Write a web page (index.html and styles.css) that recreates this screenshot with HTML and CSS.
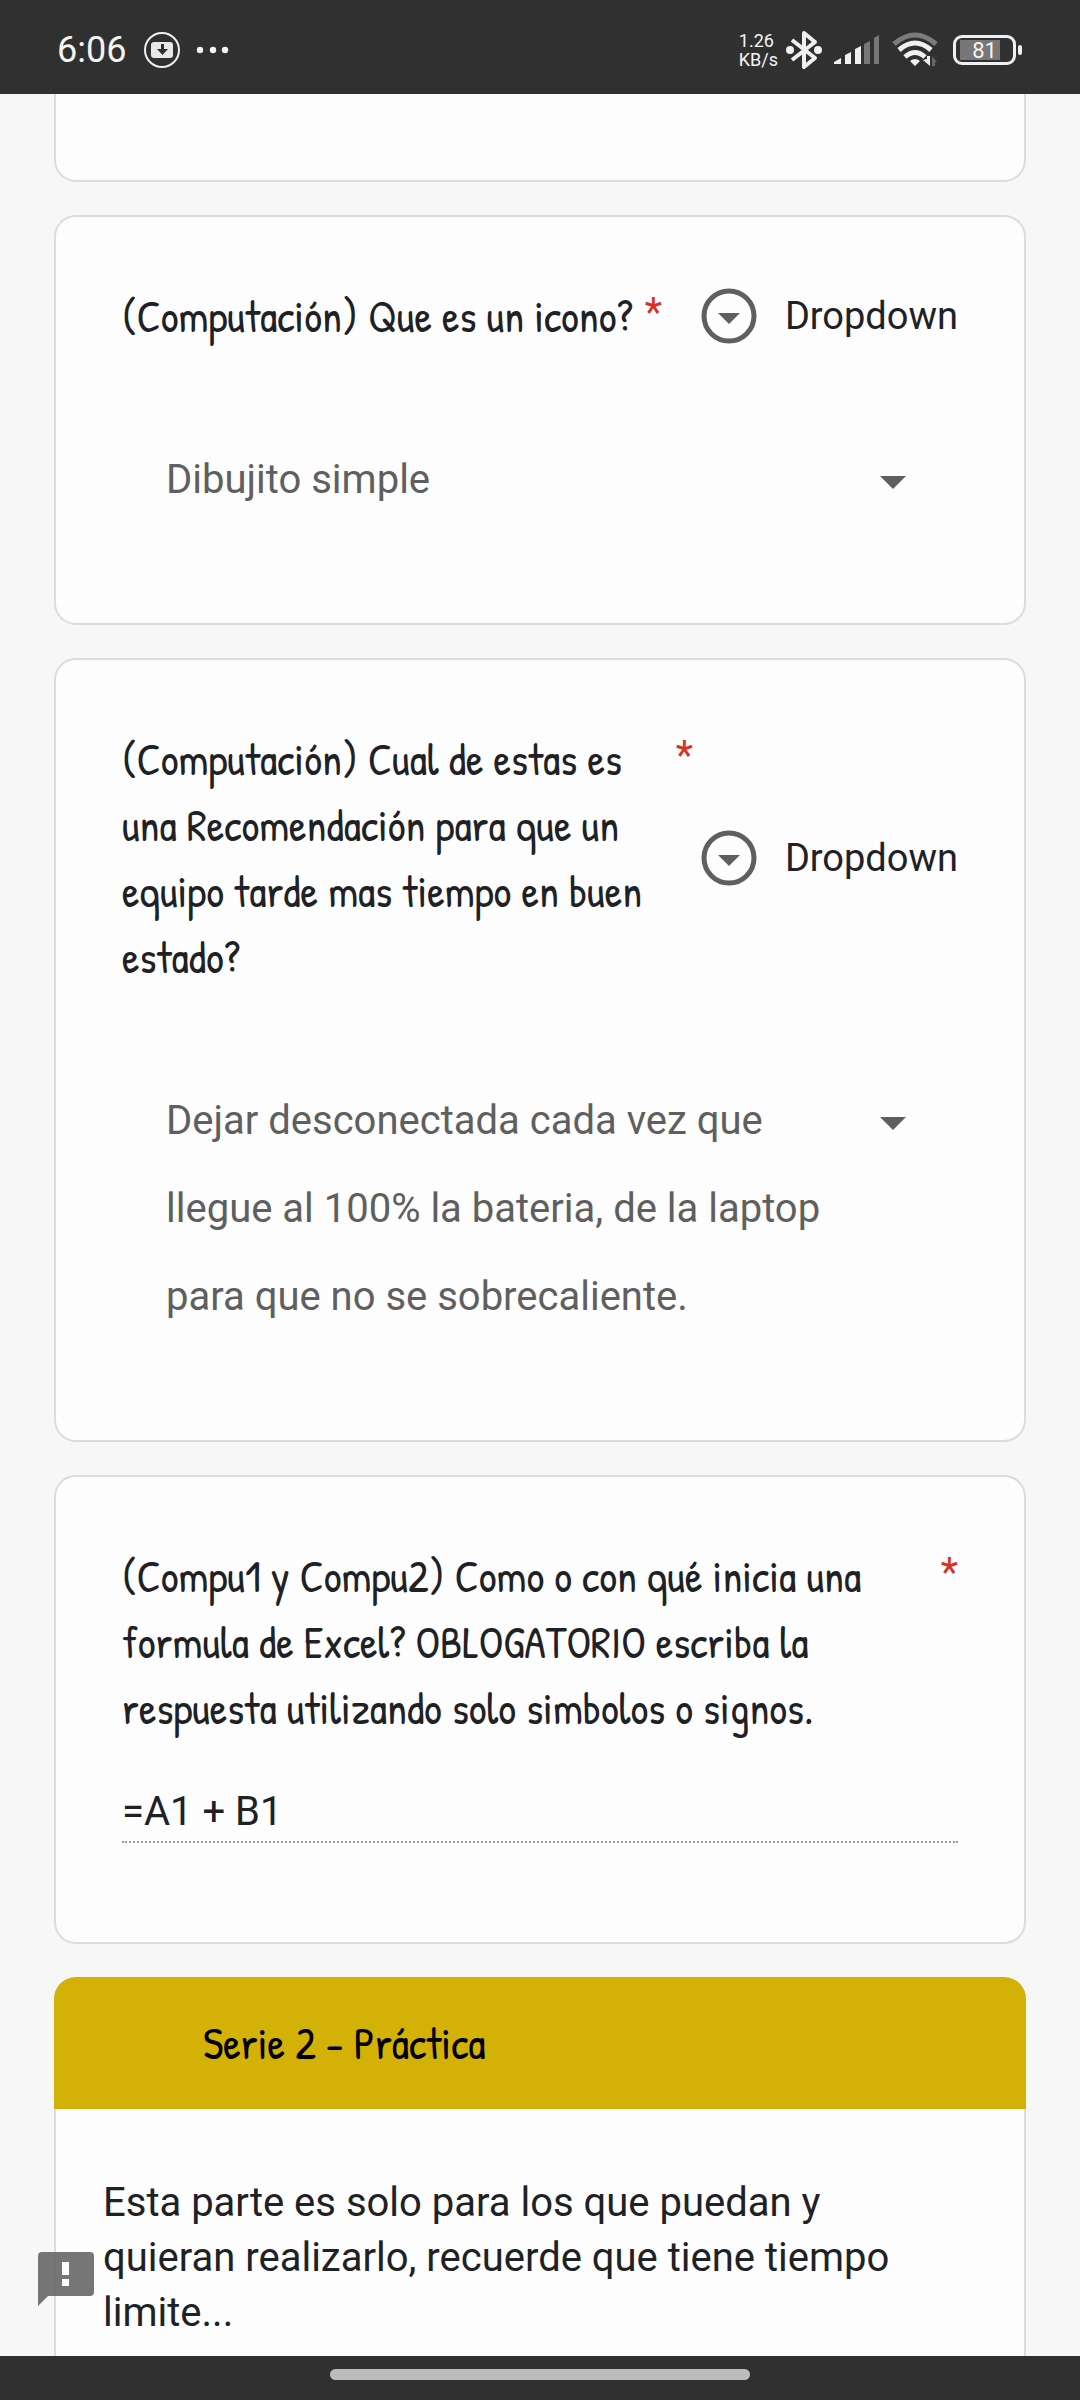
FILE: index.html
```html
<!DOCTYPE html>
<html lang="es">

  <head>

    <meta charset="utf-8">
    <meta name="viewport" content="width=device-width">

    <title>
      Formulario
    </title>

    <link rel="stylesheet" href="styles.css">

  </head>

  <body>

    <header class="statusbar">
      <span class="clock">6:06</span>
      <svg class="icon" width="36" height="36" viewBox="0 0 36 36">
        <circle cx="18" cy="18" r="17" fill="none" stroke="#f0f0f0" stroke-width="2"/>
        <rect x="7" y="10" width="22" height="16" rx="3" fill="#e8e8e8"/>
        <path d="M17 12h3v5h4l-5.500 6-5.500-6h4z" fill="#303030"/>
      </svg>
      <svg class="icon dots" width="34" height="8" viewBox="0 0 34 8">
        <g fill="#f4f4f4"><circle cx="4" cy="4" r="3.200"/><circle cx="17" cy="4" r="3.200"/><circle cx="29" cy="4" r="3.200"/></g>
      </svg>
      <div class="speed">
        <span>1.26</span>
        <span>KB/s</span>
      </div>
      <svg class="icon" width="36" height="40" viewBox="0 0 36 40">
        <path d="M6 10L29 28 18 37V3L29 12 6 30" fill="none" stroke="#f0f0f0" stroke-width="4" stroke-linejoin="round"/>
        <circle cx="4" cy="20" r="4" fill="#f0f0f0"/>
        <circle cx="32" cy="20" r="4" fill="#f0f0f0"/>
      </svg>
      <svg class="icon signal" width="46" height="30" viewBox="0 0 46 30">
        <path d="M0 29v-2l7-4v6zM11 29V20l6-3v12zM21 29V14l6-3v18z" fill="#f0f0f0"/>
        <path d="M30 29V9l6-3v23zM40 29V3l5-3v29z" fill="#777"/>
      </svg>
      <svg class="icon wifi" width="46" height="36" viewBox="0 0 46 36">
        <g fill="none" stroke-width="5">
          <path d="M2 12Q23-6 44 12" stroke="#7b7b7b"/>
          <path d="M7 18Q23 4 39 18" stroke="#f0f0f0"/>
          <path d="M13 25Q23 16 33 25" stroke="#f0f0f0"/>
        </g>
        <path d="M18 29q5-4 10 0l-5 5zM31 28l4-1V24h3v10z" fill="#f0f0f0"/>
        <path d="M40 34V24l5 6h-2v4z" fill="#666"/>
      </svg>
      <span class="battery">81</span>
    </header>

    <main class="form">

      <section class="card previous"></section>

      <section class="card">
        <div class="question">
          <label class="title" for="icono"><span>(Computación) Que es un icono?</span><b class="required">*</b></label>
          <div class="type">
            <svg width="56" height="56" viewBox="0 0 56 56">
              <circle cx="28" cy="28" r="25" fill="none" stroke="#5f5f5f" stroke-width="5"/>
              <path d="M17 25h22L28 36z" fill="#5f5f5f"/>
            </svg>
            Dropdown
          </div>
        </div>
        <div class="dropdown">
          <select id="icono">
            <option>Dibujito simple</option>
          </select>
          <svg class="arrow" width="26" height="13" viewBox="0 0 26 13"><path d="M0 0h26L13 13z" fill="#5f5f5f"/></svg>
        </div>
      </section>

      <section class="card">
        <div class="question">
          <label class="title" for="equipo"><span>(Computación) Cual de estas es una Recomendación para que un equipo tarde mas tiempo en buen estado?</span><b class="required">*</b></label>
          <div class="type">
            <svg width="56" height="56" viewBox="0 0 56 56">
              <circle cx="28" cy="28" r="25" fill="none" stroke="#5f5f5f" stroke-width="5"/>
              <path d="M17 25h22L28 36z" fill="#5f5f5f"/>
            </svg>
            Dropdown
          </div>
        </div>
        <div class="dropdown">
          <select id="equipo">
            <option>Dejar desconectada cada vez que llegue al 100% la bateria, de la laptop para que no se sobrecaliente.</option>
          </select>
          <svg class="arrow" width="26" height="13" viewBox="0 0 26 13"><path d="M0 0h26L13 13z" fill="#5f5f5f"/></svg>
        </div>
      </section>

      <section class="card">
        <div class="question">
          <label class="title" for="formula"><span>(Compu1 y Compu2) Como o con qué inicia una formula de Excel? OBLOGATORIO escriba la respuesta utilizando solo simbolos o signos.</span><b class="required">*</b></label>
        </div>
        <input type="text" class="answer" id="formula" value="=A1 + B1">
      </section>

      <section class="card series">
        <h2>Serie 2 - Práctica</h2>
        <p>Esta parte es solo para los que puedan y quieran realizarlo, recuerde que tiene tiempo limite...</p>
      </section>

      <button class="feedback" title="Feedback">
        <svg width="56" height="56" viewBox="0 0 56 56">
          <path d="M4 0H52q4 0 4 4V40q0 4-4 4H10L0 54V4q0-4 4-4zM24 10v13h7V10zM24 27v7h7v-7z" fill="#5f5f5f" fill-rule="evenodd"/>
        </svg>
      </button>

    </main>

    <footer class="navbar">
      <div class="handle"></div>
    </footer>

  </body>

</html>
```

FILE: styles.css
```css
*
{
  box-sizing: border-box;
}

body
{
  display: flex;
  flex-direction: column;
  height: 100vh;
  margin: 0;
  background: #f7f7f7;
  color: #202124;
  font-family: Roboto, sans-serif;
  font-size: 40px;
}

svg
{
  display: block;
  flex: none;
}

/* phone bars */

.statusbar
{
  display: flex;
  align-items: center;
  flex: none;
  height: 94px;
  padding: 6px 64px 0 57px;
  background: #303030;
  color: #f4f4f4;
}

.clock
{
  margin-right: 18px;
  font-size: 36px;
}

.dots
{
  margin-left: 16px;
}

.speed
{
  display: flex;
  flex-direction: column;
  margin-left: auto;
  margin-right: 8px;
  font-size: 18px;
  line-height: 19px;
}

.signal
{
  margin-left: 12px;
}

.wifi
{
  margin-left: 12px;
}

.battery
{
  position: relative;
  width: 63px;
  height: 30px;
  margin-left: 15px;
  border: 3px solid #f0f0f0;
  border-radius: 9px;
  background: linear-gradient(90deg, #777 40px, transparent 40px) 4px 2px / 49px 20px no-repeat;
  font-size: 22px;
  line-height: 25px;
  text-align: center;
}

.battery::after
{
  content: "";
  position: absolute;
  top: 7px;
  right: -9px;
  width: 4px;
  height: 10px;
  border-radius: 2px;
  background: #f0f0f0;
}

.navbar
{
  flex: none;
  height: 44px;
  padding-top: 13px;
  background: #303030;
}

.handle
{
  width: 420px;
  height: 11px;
  margin: 0 auto;
  border-radius: 6px;
  background: #bcbcbc;
}

/* form */

.form
{
  position: relative;
  flex: 1;
  min-height: 0;
  overflow: hidden;
  padding: 0 54px;
}

.card
{
  margin-bottom: 33px;
  padding: 66px 66px 99px;
  border: 2px solid #dcdcdc;
  border-radius: 22px;
  background: #fdfdfd;
}

.previous
{
  height: 88px;
  padding: 0;
  border-top: 0;
  border-radius: 0 0 22px 22px;
}

.question
{
  display: flex;
  align-items: center;
  justify-content: space-between;
}

.title
{
  display: flex;
  line-height: 66px;
}

.title span, .series h2
{
  font-family: "Patrick Hand", Lato, sans-serif;
  font-size: 44px;
  font-weight: normal;
}

.required
{
  margin-left: 12px;
  color: #d93025;
  font-weight: normal;
  line-height: 60px;
}

.type
{
  display: flex;
  align-items: center;
  gap: 28px;
  margin-left: 8px;
  font-size: 38px;
}

.dropdown
{
  display: grid;
  margin-top: 87px;
  padding: 0 44px;
}

.dropdown select, .dropdown .arrow
{
  grid-area: 1 / 1;
}

.dropdown select
{
  appearance: none;
  width: 100%;
  padding: 0 70px 0 0;
  border: 0;
  background: none;
  color: #5f5f5f;
  font: inherit;
  line-height: 88px;
  white-space: normal;
}

.dropdown .arrow
{
  justify-self: end;
  margin: 40px 8px 0 0;
  pointer-events: none;
}

.answer
{
  display: block;
  width: 100%;
  height: 66px;
  margin-top: 36px;
  padding: 4px 0 0;
  border: 0;
  border-bottom: 2px dotted #9a9a9a;
  background: none;
  color: #202124;
  font: inherit;
}

.series
{
  padding: 0;
  border-top: 0;
}

.series h2
{
  margin: 0 -2px;
  padding: 33px 149px;
  border-radius: 22px 22px 0 0;
  background: #d4b106;
  color: #000;
  line-height: 66px;
}

.series p
{
  margin: 0;
  padding: 66px 99px 66px 47px;
  line-height: 55px;
}

.feedback
{
  position: absolute;
  left: 38px;
  bottom: 48px;
  padding: 0;
  border: 0;
  background: none;
  opacity: 0.85;
}
```
